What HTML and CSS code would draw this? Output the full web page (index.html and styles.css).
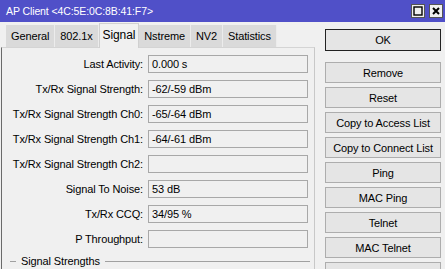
FILE: index.html
```html
<!DOCTYPE html>
<html lang="en">
<head>
  <meta charset="UTF-8">
  <title>AP Client</title>
  <link rel="stylesheet" href="styles.css">
</head>
<body>
  <div class="titlebar">
    <span class="title">AP Client &lt;4C:5E:0C:8B:41:F7&gt;</span>
    <div class="winbtns">
      <span class="wbtn">
        <svg width="10" height="10" viewBox="0 0 10 10"><rect x="1" y="1" width="8" height="8" fill="none" stroke="#000" stroke-width="1.4"/></svg>
      </span>
      <span class="wbtn">
        <svg width="10" height="10" viewBox="0 0 10 10"><path d="M2 2 L8 8 M8 2 L2 8" stroke="#000" stroke-width="2"/></svg>
      </span>
    </div>
  </div>

  <div class="main">
    <div class="left">
      <div class="tabs">
        <div class="tab">General</div>
        <div class="tab">802.1x</div>
        <div class="tab active">Signal</div>
        <div class="tab">Nstreme</div>
        <div class="tab">NV2</div>
        <div class="tab">Statistics</div>
      </div>
      <div class="panel">
        <div class="row"><span class="label">Last Activity:</span><div class="field">0.000 s</div></div>
        <div class="row"><span class="label">Tx/Rx Signal Strength:</span><div class="field">-62/-59 dBm</div></div>
        <div class="row"><span class="label">Tx/Rx Signal Strength Ch0:</span><div class="field">-65/-64 dBm</div></div>
        <div class="row"><span class="label">Tx/Rx Signal Strength Ch1:</span><div class="field">-64/-61 dBm</div></div>
        <div class="row"><span class="label">Tx/Rx Signal Strength Ch2:</span><div class="field"></div></div>
        <div class="row"><span class="label">Signal To Noise:</span><div class="field">53 dB</div></div>
        <div class="row"><span class="label">Tx/Rx CCQ:</span><div class="field">34/95 %</div></div>
        <div class="row"><span class="label">P Throughput:</span><div class="field"></div></div>
        <div class="group"><span class="dash"></span><span class="group-title">Signal Strengths</span><span class="rule"></span></div>
      </div>
    </div>

    <div class="side">
      <button class="btn default">OK</button>
      <button class="btn">Remove</button>
      <button class="btn">Reset</button>
      <button class="btn">Copy to Access List</button>
      <button class="btn">Copy to Connect List</button>
      <button class="btn">Ping</button>
      <button class="btn">MAC Ping</button>
      <button class="btn">Telnet</button>
      <button class="btn">MAC Telnet</button>
      <button class="btn"></button>
    </div>
  </div>
</body>
</html>
```

FILE: styles.css
```css
body {
  margin: 0;
  height: 269px;
  overflow: hidden;
  background: #f0f0f0;
  font-family: "Liberation Sans", Arial, sans-serif;
  font-size: 11px;
  letter-spacing: -0.12px;
  color: #000;
}

.titlebar {
  height: 22px;
  background: #5050c8;
  color: #fff;
  display: flex;
  align-items: center;
  justify-content: space-between;
  padding-left: 6px;
}

.title {
  font-size: 10.5px;
  letter-spacing: -0.1px;
}

.winbtns {
  display: flex;
  gap: 4px;
  margin-right: 2px;
}

.wbtn {
  width: 12px;
  height: 12px;
  background: #f0f0f0;
  border: 1px solid #555;
  display: flex;
  align-items: center;
  justify-content: center;
}

.main {
  display: flex;
}

.left {
  width: 315px;
}

.tabs {
  display: flex;
  margin: 3px 0 0 6px;
  height: 22px;
  align-items: flex-end;
}

.tab {
  height: 22px;
  line-height: 22px;
  padding: 0 5px;
  background: #dadada;
  border-right: 1px solid #ececec;
}

.tab.active {
  height: 24px;
  line-height: 22px;
  padding: 0 3px;
  background: #f0f0f0;
  border: 1px solid #d0d0d0;
  border-bottom: none;
  margin-bottom: -1px;
  position: relative;
  font-size: 12px;
}

.panel {
  margin-left: 1px;
  border-top: 1px solid #d4d4d4;
  border-right: 1px solid #c8c8c8;
  border-left: 1px solid #6a6a6a;
  padding-top: 7px;
  height: 240px;
}

.row {
  display: flex;
  align-items: center;
  height: 18px;
  margin-bottom: 7px;
}

.label {
  width: 141px;
  text-align: right;
  margin-right: 5px;
}

.field {
  width: 160px;
  height: 18px;
  box-sizing: border-box;
  border: 1px solid #a8a8a8;
  padding-left: 3px;
  line-height: 16px;
}

.group {
  display: flex;
  align-items: center;
  margin-top: 4px;
  padding-left: 8px;
}

.dash {
  width: 6px;
  border-top: 1px solid #a0a0a0;
}

.group-title {
  margin: 0 5px;
}

.rule {
  flex: 1;
  border-top: 1px solid #a0a0a0;
  margin-right: 4px;
}

.side {
  display: flex;
  flex-direction: column;
  margin-left: 10px;
  padding-top: 7px;
  width: 116px;
}

.btn {
  height: 21px;
  margin-bottom: 4px;
  padding: 0;
  font-family: inherit;
  font-size: 11px;
  letter-spacing: -0.12px;
  color: #000;
  background: #e5e5e5;
  border: 1px solid #adadad;
}

.btn.default {
  height: 22px;
  border-color: #222;
  margin-bottom: 11px;
}
```
